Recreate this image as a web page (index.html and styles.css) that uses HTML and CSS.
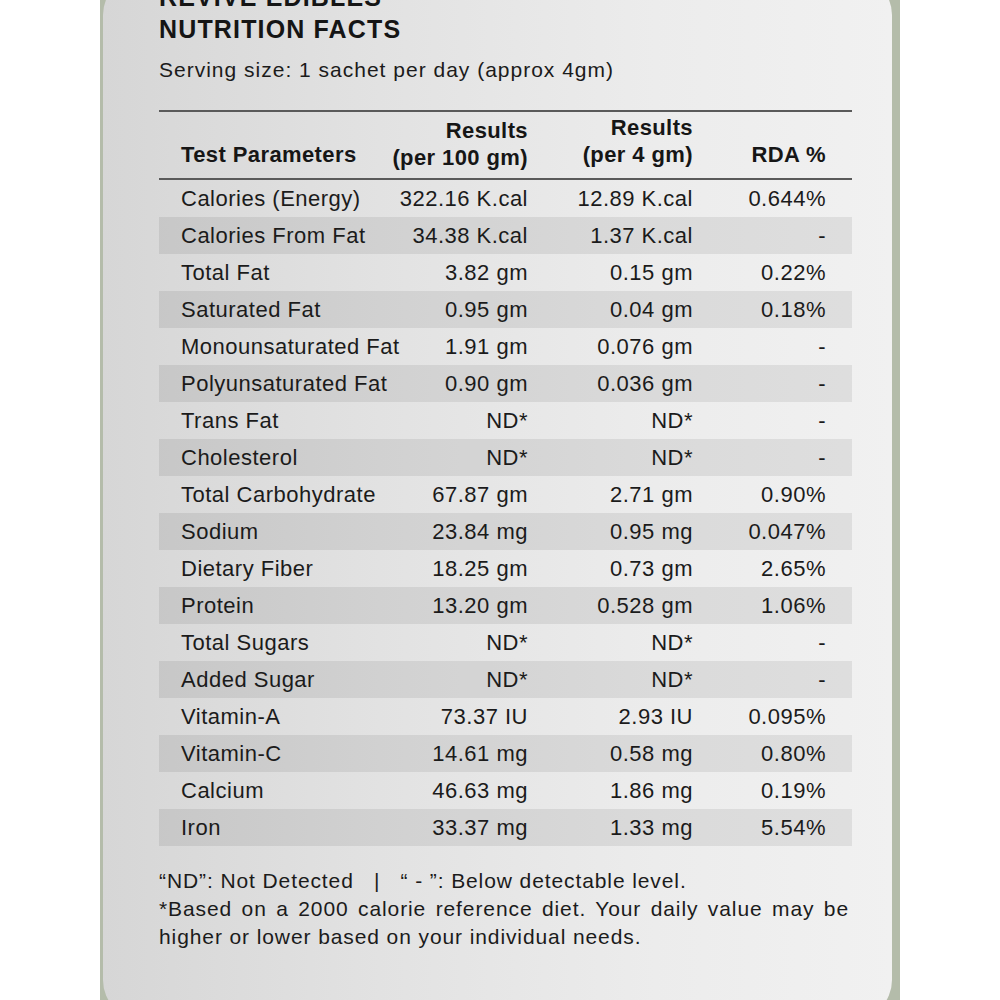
FILE: index.html
```html
<!DOCTYPE html>
<html lang="en">
<head>
<meta charset="utf-8">
<title>Nutrition Facts</title>
<link rel="stylesheet" href="styles.css">
</head>
<body>
<div class="frame">
  <section class="panel">
    <h1 class="title"><span class="brand">REVIVE EDIBLES</span><span class="heading">NUTRITION FACTS</span></h1>
    <p class="serving">Serving size: 1 sachet per day (approx 4gm)</p>
    <table class="facts">
      <colgroup>
        <col class="c1"><col class="c2"><col class="c3"><col class="c4">
      </colgroup>
      <thead>
        <tr>
          <th class="param">Test Parameters</th>
          <th class="num h100">Results<br>(per 100 gm)</th>
          <th class="num h4">Results<br>(per 4 gm)</th>
          <th class="num rda">RDA %</th>
        </tr>
      </thead>
      <tbody>
        <tr><td>Calories (Energy)</td><td>322.16 K.cal</td><td>12.89 K.cal</td><td>0.644%</td></tr>
        <tr><td>Calories From Fat</td><td>34.38 K.cal</td><td>1.37 K.cal</td><td>-</td></tr>
        <tr><td>Total Fat</td><td>3.82 gm</td><td>0.15 gm</td><td>0.22%</td></tr>
        <tr><td>Saturated Fat</td><td>0.95 gm</td><td>0.04 gm</td><td>0.18%</td></tr>
        <tr><td>Monounsaturated Fat</td><td>1.91 gm</td><td>0.076 gm</td><td>-</td></tr>
        <tr><td>Polyunsaturated Fat</td><td>0.90 gm</td><td>0.036 gm</td><td>-</td></tr>
        <tr><td>Trans Fat</td><td>ND*</td><td>ND*</td><td>-</td></tr>
        <tr><td>Cholesterol</td><td>ND*</td><td>ND*</td><td>-</td></tr>
        <tr><td>Total Carbohydrate</td><td>67.87 gm</td><td>2.71 gm</td><td>0.90%</td></tr>
        <tr><td>Sodium</td><td>23.84 mg</td><td>0.95 mg</td><td>0.047%</td></tr>
        <tr><td>Dietary Fiber</td><td>18.25 gm</td><td>0.73 gm</td><td>2.65%</td></tr>
        <tr><td>Protein</td><td>13.20 gm</td><td>0.528 gm</td><td>1.06%</td></tr>
        <tr><td>Total Sugars</td><td>ND*</td><td>ND*</td><td>-</td></tr>
        <tr><td>Added Sugar</td><td>ND*</td><td>ND*</td><td>-</td></tr>
        <tr><td>Vitamin-A</td><td>73.37 IU</td><td>2.93 IU</td><td>0.095%</td></tr>
        <tr><td>Vitamin-C</td><td>14.61 mg</td><td>0.58 mg</td><td>0.80%</td></tr>
        <tr><td>Calcium</td><td>46.63 mg</td><td>1.86 mg</td><td>0.19%</td></tr>
        <tr><td>Iron</td><td>33.37 mg</td><td>1.33 mg</td><td>5.54%</td></tr>
      </tbody>
    </table>
    <div class="notes">
      <p class="legend">“ND”: Not Detected &nbsp;&nbsp;|&nbsp;&nbsp; “ - ”: Below detectable level.</p>
      <p class="disclaimer"><span class="jline">*Based on a 2000 calorie reference diet. Your daily value may be</span><span class="lastline">higher or lower based on your individual needs.</span></p>
    </div>
  </section>
</div>
</body>
</html>
```

FILE: styles.css
```css
html, body {
  margin: 0;
  padding: 0;
  height: 1000px;
  overflow: hidden;
  background: #ffffff;
}

body {
  font-family: "Liberation Sans", Arial, sans-serif;
  color: #1b1b1b;
}

.frame {
  width: 800px;
  height: 1000px;
  margin: 0 auto;
  background: #b4bcaa;
  overflow: hidden;
  display: flex;
}

.panel {
  flex: 1;
  margin: -25px 8px 0 3px;
  height: 1045px;
  border-radius: 40px;
  background: linear-gradient(90deg, #d6d6d6 0%, #e2e2e2 35%, #ececec 70%, #f1f1f1 100%);
  padding: 6px 40px 0 56px;
  box-sizing: border-box;
}

.title {
  margin: 0;
  font-size: 25px;
  line-height: 32px;
  font-weight: 700;
  letter-spacing: 1.15px;
  color: #151515;
}

.title .brand,
.title .heading {
  display: block;
}

.serving {
  margin: 11px 0 0;
  font-size: 21px;
  line-height: 28px;
  letter-spacing: 1px;
}

.facts {
  margin-top: 26px;
  width: 693px;
  border-collapse: collapse;
  table-layout: fixed;
  font-size: 22px;
  letter-spacing: 0.5px;
}

.facts .c1 { width: 222px; }
.facts .c2 { width: 147px; }
.facts .c3 { width: 165px; }
.facts .c4 { width: 159px; }

.facts thead tr {
  height: 68px;
  border-top: 2px solid #5a5a5a;
  border-bottom: 2px solid #5a5a5a;
}

.facts th {
  font-weight: 700;
  line-height: 27px;
  letter-spacing: 0.4px;
  vertical-align: bottom;
  padding: 0 0 10px;
  white-space: nowrap;
  color: #161616;
}

.facts th.param {
  text-align: left;
  padding-left: 22px;
}

.facts th.num {
  text-align: right;
}

.facts th.h100 {
  padding-bottom: 7px;
}

.facts th.rda,
.facts td:nth-child(4) {
  padding-right: 26px;
}

.facts tbody tr {
  height: 37px;
}

.facts tbody tr:nth-child(even) {
  background: rgba(0, 0, 0, 0.075);
}

.facts td {
  padding: 0;
  line-height: 37px;
  white-space: nowrap;
  text-align: right;
}

.facts td:first-child {
  text-align: left;
  padding-left: 22px;
}

.notes {
  margin-top: 21px;
  width: 690px;
  font-size: 21px;
  line-height: 28px;
  letter-spacing: 0.9px;
}

.notes p {
  margin: 0;
}

.legend {
  white-space: pre-wrap;
}

.disclaimer .jline {
  display: block;
  text-align: justify;
  text-align-last: justify;
}

.disclaimer .lastline {
  display: block;
}
```
